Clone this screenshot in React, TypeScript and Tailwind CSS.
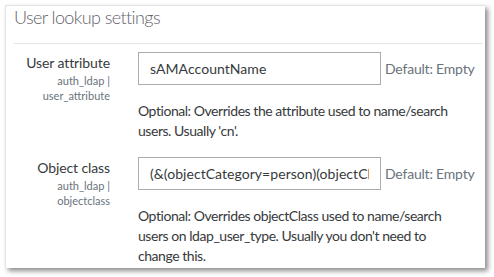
import React from "react";

type Setting = {
  label: string;
  plugin: string;
  name: string;
  value: string;
  description: string;
};

const SETTINGS: Setting[] = [
  {
    label: "User attribute",
    plugin: "auth_ldap |",
    name: "user_attribute",
    value: "sAMAccountName",
    description:
      "Optional: Overrides the attribute used to name/search users. Usually 'cn'.",
  },
  {
    label: "Object class",
    plugin: "auth_ldap |",
    name: "objectclass",
    value: "(&(objectCategory=person)(objectClass=user))",
    description:
      "Optional: Overrides objectClass used to name/search users on ldap_user_type. Usually you don't need to change this.",
  },
];

function SettingRow({ setting }: { setting: Setting }) {
  return (
    <div className="flex">
      <div className="w-[96px] shrink-0 pt-[1px] text-right">
        <div className="text-[14px] leading-[20px] tracking-[-0.1px] text-[#373a3c]">
          {setting.label}
        </div>
        <div className="text-[11px] leading-[15px] text-[#6a737b]">
          {setting.plugin}
        </div>
        <div className="text-[11px] leading-[15px] text-[#6a737b]">
          {setting.name}
        </div>
      </div>
      <div className="ml-[28px] flex-1">
        <div className="flex items-center">
          <input
            readOnly
            value={setting.value}
            className="h-[33px] w-[243px] border border-[#a9adb1] bg-white px-[11px] text-[14px] tracking-[0.05px] text-[#373a3c] outline-none"
          />
          <span className="ml-[4px] text-[14px] tracking-[-0.2px] text-[#6a737b]">
            Default: Empty
          </span>
        </div>
        <p className="mt-[16px] w-[328px] text-[14px] leading-[20px] tracking-[-0.45px] text-[#373a3c]">
          {setting.description}
        </p>
      </div>
    </div>
  );
}

export default function App() {
  return (
    <div
      className="h-[277px] w-[494px] bg-white pl-[5px] pt-[5px]"
      style={{ fontFamily: "Lato, 'Open Sans', sans-serif" }}
    >
      <div className="h-[263px] w-[480px] border-l border-t border-[#e4e4e4] bg-white pl-[8px] pr-[2px] shadow-[3px_3px_5px_rgba(0,0,0,0.45)]">
        <h3 className="h-[37px] text-[18px] font-light leading-[23px] tracking-[-0.6px] text-[#5f6368]">
          User lookup settings
        </h3>
        <div className="border-b border-[#e6e6e6]" />
        <div className="flex flex-col gap-[16px] pt-[8px]">
          {SETTINGS.map((setting) => (
            <SettingRow key={setting.name} setting={setting} />
          ))}
        </div>
      </div>
    </div>
  );
}
